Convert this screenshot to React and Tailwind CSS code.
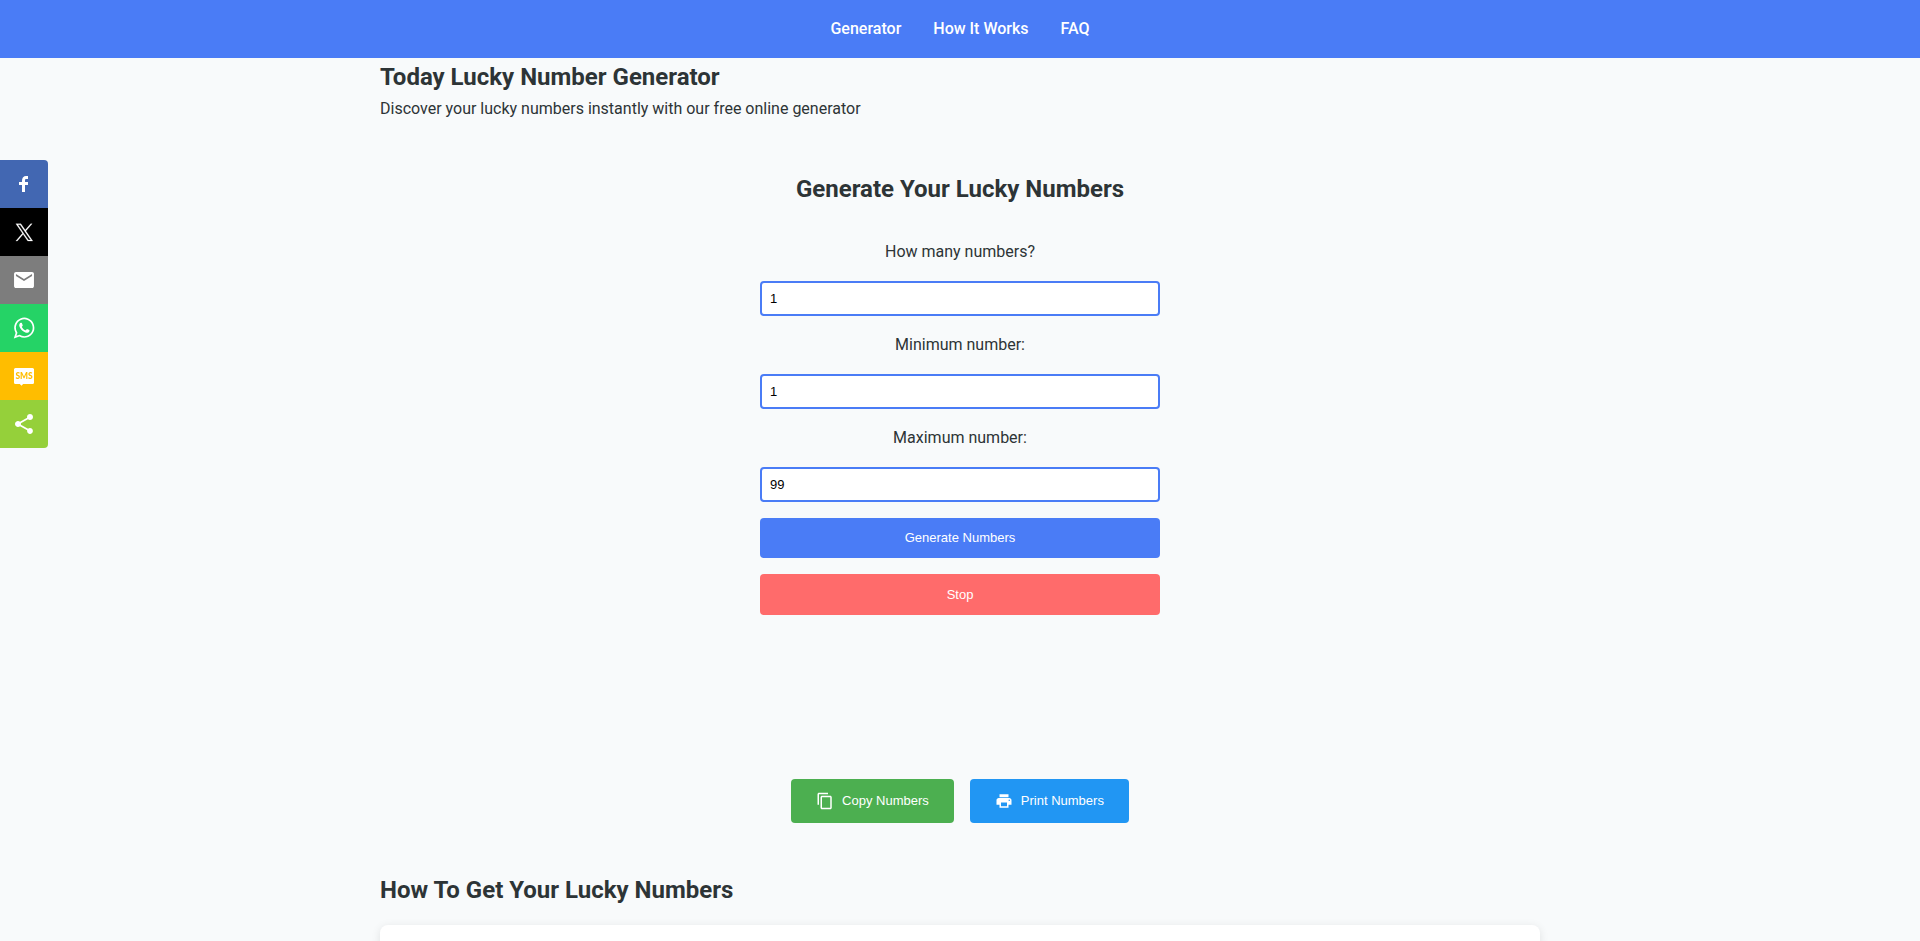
import { useState } from "react";

const navLinks = [
  { label: "Generator", href: "#generator" },
  { label: "How It Works", href: "#how-it-works" },
  { label: "FAQ", href: "#faq" },
];

const shareButtons = [
  {
    name: "Facebook",
    color: "bg-[#4267b2]",
    icon: (
      <path d="m21.7 16.7h5v5h-5v11.6h-5v-11.6h-5v-5h5v-2.1c0-2 0.6-4.5 1.8-5.9 1.3-1.3 2.8-2 4.7-2h3.5v5h-3.5c-0.9 0-1.5 0.6-1.5 1.5v3.5z" />
    ),
  },
  {
    name: "X",
    color: "bg-black",
    icon: (
      <path
        transform="translate(6.4 6.2) scale(0.0235)"
        stroke="white"
        strokeWidth="18"
        d="M714.163 519.284L1160.89 0H1055.03L667.137 450.887L357.328 0H0L468.492 681.821L0 1226.37H105.866L515.491 750.218L842.672 1226.37H1200L714.137 519.284H714.163ZM569.165 687.828L521.697 619.934L144.011 79.6944H306.615L611.412 515.685L658.88 583.579L1055.08 1150.3H892.476L569.165 687.854V687.828Z"
      />
    ),
  },
  {
    name: "Email",
    color: "bg-[#7d7d7d]",
    icon: (
      <path d="m33.4 13.4v-3.4l-13.4 8.4-13.4-8.4v3.4l13.4 8.2z m0-6.8q1.3 0 2.3 1.1t0.9 2.3v20q0 1.3-0.9 2.3t-2.3 1.1h-26.8q-1.3 0-2.3-1.1t-0.9-2.3v-20q0-1.3 0.9-2.3t2.3-1.1h26.8z" />
    ),
  },
  {
    name: "WhatsApp",
    color: "bg-[#25d366]",
    icon: (
      <path d="m25 21.7q0.3 0 2.2 1t2 1.2q0 0.1 0 0.3 0 0.8-0.4 1.7-0.3 0.9-1.6 1.5t-2.2 0.6q-1.3 0-4.3-1.4-2.2-1-3.8-2.6t-3.3-4.2q-1.6-2.3-1.6-4.3v-0.2q0.1-2 1.7-3.5 0.5-0.5 1.2-0.5 0.1 0 0.4 0t0.4 0.1q0.4 0 0.6 0.1t0.3 0.6q0.2 0.5 0.8 2t0.5 1.7q0 0.5-0.8 1.3t-0.7 1q0 0.2 0.1 0.3 0.7 1.7 2.3 3.1 1.2 1.2 3.3 2.2 0.3 0.2 0.5 0.2 0.4 0 1.2-1.1t1.2-1.1z m-4.5 11.9q2.8 0 5.4-1.1t4.5-3 3-4.5 1.1-5.4-1.1-5.5-3-4.5-4.5-2.9-5.4-1.2-5.5 1.2-4.5 2.9-2.9 4.5-1.2 5.5q0 4.5 2.7 8.2l-1.7 5.2 5.4-1.8q3.5 2.4 7.7 2.4z m0-30.9q3.4 0 6.5 1.4t5.4 3.6 3.5 5.3 1.4 6.6-1.4 6.5-3.5 5.3-5.4 3.6-6.5 1.4q-4.4 0-8.2-2.1l-9.3 3 3-9.1q-2.4-3.9-2.4-8.6 0-3.5 1.4-6.6t3.6-5.3 5.3-3.6 6.6-1.4z" />
    ),
  },
  {
    name: "SMS",
    color: "bg-[#ffbd00]",
    icon: (
      <>
        <path d="M5.8 6.8h28.4q2.5 0 2.5 2.5v21.4q0 2.5-2.5 2.5H18.5l-2.6 3.2-3-3.2H5.8q-2.5 0-2.5-2.5v-21.4q0-2.5 2.5-2.5z" />
        <text
          x="20"
          y="25"
          textAnchor="middle"
          fontSize="14"
          fontWeight="900"
          fill="#ffbd00"
          className="font-[Lato,sans-serif]"
        >
          SMS
        </text>
      </>
    ),
  },
  {
    name: "Share",
    color: "bg-[#95d03a]",
    icon: (
      <path d="m30 26.8c2.7 0 4.8 2.2 4.8 4.8s-2.1 5-4.8 5-4.8-2.3-4.8-5c0-0.3 0-0.7 0-1.1l-11.8-6.8c-0.9 0.8-2.1 1.3-3.4 1.3-2.7 0-5-2.3-5-5s2.3-5 5-5c1.3 0 2.5 0.5 3.4 1.3l11.8-6.8c-0.1-0.4-0.2-0.8-0.2-1.1 0-2.8 2.3-5 5-5s5 2.2 5 5-2.3 5-5 5c-1.3 0-2.5-0.6-3.4-1.4l-11.8 6.8c0.1 0.4 0.2 0.8 0.2 1.2s-0.1 0.8-0.2 1.2l11.9 6.8c0.9-0.7 2.1-1.2 3.3-1.2z" />
    ),
  },
];

function ShareBar() {
  return (
    <div className="fixed left-0 top-40 z-20 flex flex-col overflow-hidden rounded-r">
      {shareButtons.map((item) => (
        <button
          key={item.name}
          type="button"
          aria-label={item.name}
          className={`flex size-12 items-center justify-center ${item.color}`}
        >
          <svg viewBox="0 0 40 40" className="size-6 fill-white" aria-hidden="true">
            {item.icon}
          </svg>
        </button>
      ))}
    </div>
  );
}

function NumberField({ id, label, value, onChange }) {
  return (
    <>
      <label htmlFor={id} className="text-center leading-[26px]">
        {label}
      </label>
      <input
        id={id}
        type="number"
        value={value}
        onChange={(e) => onChange(e.target.value)}
        className="w-full rounded border-2 border-[#4a7cf6] bg-white p-2 font-['Liberation_Sans',sans-serif] text-[13px] leading-[15px] text-black"
      />
    </>
  );
}

export default function App() {
  const [count, setCount] = useState("1");
  const [min, setMin] = useState("1");
  const [max, setMax] = useState("99");
  const [numbers, setNumbers] = useState([]);

  const handleGenerate = (e) => {
    e.preventDefault();
    const low = Number(min);
    const high = Number(max);
    setNumbers(
      Array.from({ length: Number(count) }, () => Math.floor(Math.random() * (high - low + 1)) + low)
    );
  };

  return (
    <div className="min-h-screen bg-[#f8fafb] font-[Roboto,sans-serif] text-base text-[#2d3436]">
      <nav className="flex justify-center gap-8 bg-[#4a7cf6] p-4">
        {navLinks.map((link) => (
          <a key={link.href} href={link.href} className="font-medium leading-[26px] text-white">
            {link.label}
          </a>
        ))}
      </nav>

      <ShareBar />

      <div className="mx-auto max-w-[1200px] px-5">
        <header>
          <h1 className="text-2xl font-bold leading-[38px]">Today Lucky Number Generator</h1>
          <p className="leading-[26px]">Discover your lucky numbers instantly with our free online generator</p>
        </header>

        {/* Generator */}
        <main id="generator" className="pt-12">
          <h2 className="text-center text-2xl font-bold leading-[38px]">Generate Your Lucky Numbers</h2>
          <form onSubmit={handleGenerate} className="mx-auto mt-[31px] flex max-w-[400px] flex-col gap-4">
            <NumberField id="count" label="How many numbers?" value={count} onChange={setCount} />
            <NumberField id="min" label="Minimum number:" value={min} onChange={setMin} />
            <NumberField id="max" label="Maximum number:" value={max} onChange={setMax} />
            <button
              type="submit"
              className="h-10 rounded bg-[#4a7cf6] font-['Liberation_Sans',sans-serif] text-[13px] text-white"
            >
              Generate Numbers
            </button>
            <button
              type="button"
              onClick={() => setNumbers([])}
              className="h-[41px] rounded bg-[#ff6b6b] font-['Liberation_Sans',sans-serif] text-[13px] text-white"
            >
              Stop
            </button>
          </form>

          {/* Result area */}
          <div className="my-8 flex min-h-[100px] items-center justify-center gap-4 text-2xl font-bold">
            {numbers.map((n, i) => (
              <span key={i}>{n}</span>
            ))}
          </div>

          <div className="flex justify-center gap-4">
            <button
              type="button"
              className="flex h-11 items-center gap-2 rounded bg-[#4caf50] px-[25px] font-['Liberation_Sans',sans-serif] text-[13px] text-white"
            >
              <svg viewBox="0 0 24 24" className="size-[18px] fill-white" aria-hidden="true">
                <path d="M16 1H4c-1.1 0-2 .9-2 2v14h2V3h12V1zm3 4H8c-1.1 0-2 .9-2 2v14c0 1.1.9 2 2 2h11c1.1 0 2-.9 2-2V7c0-1.1-.9-2-2-2zm0 16H8V7h11v14z" />
              </svg>
              Copy Numbers
            </button>
            <button
              type="button"
              onClick={() => window.print()}
              className="flex h-11 items-center gap-2 rounded bg-[#2196f3] px-[25px] font-['Liberation_Sans',sans-serif] text-[13px] text-white"
            >
              <svg viewBox="0 0 24 24" className="size-[18px] fill-white" aria-hidden="true">
                <path d="M19 8H5c-1.66 0-3 1.34-3 3v6h4v4h12v-4h4v-6c0-1.66-1.34-3-3-3zm-3 11H8v-5h8v5zm3-7c-.55 0-1-.45-1-1s.45-1 1-1 1 .45 1 1-.45 1-1 1zm-1-9H6v4h12V3z" />
              </svg>
              Print Numbers
            </button>
          </div>
        </main>

        {/* How it works */}
        <section id="how-it-works" className="pt-12">
          <h2 className="text-2xl font-bold leading-[38px]">How To Get Your Lucky Numbers</h2>
          <div className="mt-4 min-h-40 rounded-lg bg-white p-8 shadow-[0_2px_10px_rgba(0,0,0,0.1)]" />
        </section>
      </div>
    </div>
  );
}
